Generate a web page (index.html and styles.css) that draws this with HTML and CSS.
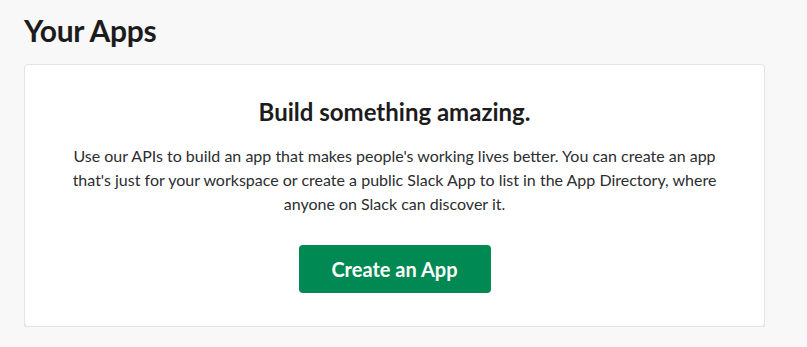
FILE: index.html
```html
<!DOCTYPE html>
<html lang="en">
<head>
  <meta charset="UTF-8">
  <meta name="viewport" content="width=device-width, initial-scale=1.0">
  <title>Your Apps</title>
  <link rel="stylesheet" href="styles.css">
</head>
<body>
  <div class="page">
    <h1 class="page-title">Your Apps</h1>
    <div class="card">
      <h2>Build something amazing.</h2>
      <p>Use our APIs to build an app that makes people's working lives better. You can create an app that's just for your workspace or create a public Slack App to list in the App Directory, where anyone on Slack can discover it.</p>
      <div class="button-group">
        <button type="button">Create an App</button>
      </div>
    </div>
  </div>
</body>
</html>
```

FILE: styles.css
```css
/* global */
body {
  font-family: Lato, "Open Sans", sans-serif;
  background-color: #f8f8f8;
  color: #2c2d30;
  margin: 0;
  padding: 0;
}

.page {
  width: 741px;
  padding: 12px 0 0 24px;
}

.page-title {
  font-size: 30px;
  font-weight: 700;
  line-height: 36px;
  letter-spacing: -0.3px;
  color: #1d1c1d;
  margin: 0 0 16px;
}

.card {
  background: #fff;
  border: 1px solid #e4e4e4;
  border-radius: 4px;
  box-shadow: 0 1px 0 rgba(0, 0, 0, 0.12);
  padding: 31px 40px 33px;
  text-align: center;
}

.card h2 {
  font-size: 24px;
  font-weight: 700;
  line-height: 32px;
  color: #1d1c1d;
  margin: 0 0 16px;
}

.card p {
  font-size: 16px;
  line-height: 24px;
  margin: 0;
}

.button-group {
  margin-top: 29px;
}

button {
  width: 192px;
  height: 48px;
  background-color: #008952;
  color: #fff;
  border: none;
  border-radius: 4px;
  font-family: Lato, sans-serif;
  font-size: 20px;
  font-weight: 700;
  cursor: pointer;
}

button:hover {
  background-color: #007a49;
}
```
